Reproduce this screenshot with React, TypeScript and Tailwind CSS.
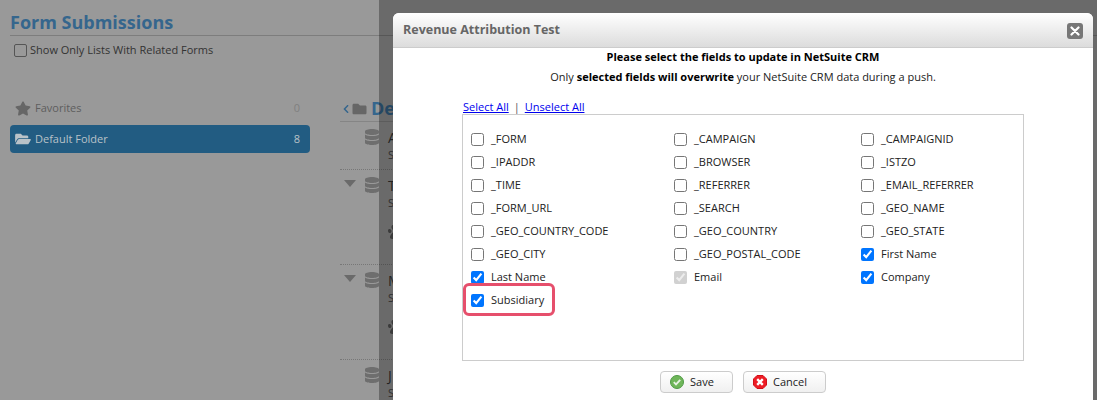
import React from 'react';
import { FaStar, FaFolderOpen, FaFolder, FaDatabase, FaPaw, FaChevronLeft } from 'react-icons/fa';

const fields = [
  { name: '_FORM' }, { name: '_CAMPAIGN' }, { name: '_CAMPAIGNID' },
  { name: '_IPADDR' }, { name: '_BROWSER' }, { name: '_ISTZO' },
  { name: '_TIME' }, { name: '_REFERRER' }, { name: '_EMAIL_REFERRER' },
  { name: '_FORM_URL' }, { name: '_SEARCH' }, { name: '_GEO_NAME' },
  { name: '_GEO_COUNTRY_CODE' }, { name: '_GEO_COUNTRY' }, { name: '_GEO_STATE' },
  { name: '_GEO_CITY' }, { name: '_GEO_POSTAL_CODE' }, { name: 'First Name', checked: true },
  { name: 'Last Name', checked: true }, { name: 'Email', checked: true, disabled: true }, { name: 'Company', checked: true },
  { name: 'Subsidiary', checked: true },
];

// rows of the list behind the dialog, only their left edge shows
const ListRow = ({ letter, caret, paw, height }: { letter: string; caret?: boolean; paw?: boolean; height: string }) => (
  <div className={`flex ${height} border-b border-dotted border-[#777] pt-[7px]`}>
    <div className="w-[25px] pl-[4px] pt-[3px]">
      {caret && (
        <svg viewBox="0 0 12 7" className="w-[12px] h-[7px]">
          <path d="M0 0 H12 L6 7 Z" fill="#6a6a6a" />
        </svg>
      )}
    </div>
    <FaDatabase className="w-[14px] h-[16px] text-[#6e6e6e]" />
    <div className="ml-[9px]">
      <p className="text-[14px] leading-[18px] text-[#333]">{letter}</p>
      <p className="text-[11px] leading-[16px] text-[#444]">S</p>
      {paw && <FaPaw className="w-[16px] h-[16px] mt-[13px] text-[#555]" />}
    </div>
  </div>
);

const App = () => {
  return (
    <div className="relative w-[1097px] h-[400px] overflow-hidden bg-[#999999] font-['Open_Sans',sans-serif] text-[11px]">
      {/* page under the overlay */}
      <div className="pl-[10px] pt-[10px]">
        <h1 className="text-[18px] leading-[25px] font-bold text-[#35668d] border-b border-[#7d7d7d] h-[26px]">Form Submissions</h1>
        <label className="flex items-center gap-[3px] mt-[7px] pl-[4px] h-[14px] text-[#333]">
          <input type="checkbox" className="appearance-none w-[13px] h-[13px] m-0 rounded-[2px] border border-[#555]" />
          Show Only Lists With Related Forms
        </label>
        <div className="flex mt-[39px]">
          <div className="w-[300px]">
            <div className="flex items-center h-[24px] pl-[5px] pr-[10px] text-[#5e5e5e]">
              <FaStar className="w-[16px] h-[15px] text-[#666]" />
              <span className="ml-[4px]">Favorites</span>
              <span className="ml-auto text-[#808080]">0</span>
            </div>
            <div className="flex items-center h-[28px] mt-[5px] pl-[5px] pr-[10px] rounded-[4px] bg-[#225c82] text-[#b9c2c8]">
              <FaFolderOpen className="w-[16px] h-[14px]" />
              <span className="ml-[4px]">Default Folder</span>
              <span className="ml-auto">8</span>
            </div>
          </div>
          <div className="ml-[30px] w-[200px]">
            <div className="flex items-center h-[26px] border-b border-[#858585]">
              <FaChevronLeft className="w-[6px] h-[10px] ml-[3px] text-[#35668d]" />
              <FaFolder className="w-[15px] h-[14px] ml-[3px] text-[#666]" />
              <span className="ml-[4px] text-[18px] font-bold text-[#35668d]">Default</span>
            </div>
            <ListRow letter="A" height="h-[48px]" />
            <ListRow letter="T" caret paw height="h-[95px]" />
            <ListRow letter="M" caret paw height="h-[95px]" />
            <ListRow letter="J" height="h-[48px]" />
          </div>
        </div>
      </div>

      {/* dialog overlay */}
      <div className="absolute inset-y-0 left-[379px] right-0 bg-black/30 pl-[14px] pr-[4px] pt-[13px]">
        <div className="h-[400px] bg-white rounded-t-[6px]">
          <div className="flex items-center justify-between h-[35px] pl-[10px] pr-[10px] rounded-t-[6px] border-b border-[#cccccc] bg-gradient-to-b from-white to-[#dcdcdc]">
            <span className="text-[12.5px] font-bold text-[#666666]">Revenue Attribution Test</span>
            <button className="flex items-center justify-center w-[16px] h-[16px] mt-[1px] rounded-[3px] bg-[#777777]">
              <svg viewBox="0 0 10 10" className="w-[10px] h-[10px]">
                <path d="M1.5 1.5 L8.5 8.5 M8.5 1.5 L1.5 8.5" stroke="#ffffff" strokeWidth="2.2" strokeLinecap="round" />
              </svg>
            </button>
          </div>
          <p className="text-center font-bold text-black leading-[16px] mt-[1px]">Please select the fields to update in NetSuite CRM</p>
          <p className="text-center text-[#222] leading-[16px] mt-[4px]">
            Only <span className="font-bold text-black">selected fields will overwrite</span> your NetSuite CRM data during a push.
          </p>
          <div className="ml-[69px] mt-[14px] w-[562px]">
            <div className="h-[15px] leading-[16px] pl-[1px] text-[#555]">
              <a className="underline text-[#0000ee]">Select All</a>
              <span className="mx-[5px]">|</span>
              <a className="underline text-[#0000ee]">Unselect All</a>
            </div>
            <div className="relative h-[247px] border border-[#cccccc] pl-[8px] pt-[13px]">
              <div className="grid grid-cols-[203px_187px_1fr] auto-rows-[23px]">
                {fields.map((f) => (
                  <label key={f.name} className="flex items-center gap-[7px] h-[23px] text-[#222]">
                    <input type="checkbox" defaultChecked={f.checked} disabled={f.disabled} className="w-[13px] h-[13px] m-0" />
                    {f.name}
                  </label>
                ))}
              </div>
              {/* annotation round the Subsidiary row */}
              <div className="absolute left-0 top-[168px] w-[92px] h-[33px] rounded-[6px] border-[3px] border-[#e64f6c]" />
            </div>
            <div className="flex justify-center gap-[10px] mt-[10px]">
              <button className="flex items-center gap-[6px] w-[73px] h-[22px] pl-[9px] rounded-[4px] border border-[#cccccc] bg-gradient-to-b from-white to-[#f0f0f0] text-[#222]">
                <svg viewBox="0 0 14 14" className="w-[14px] h-[14px]">
                  <circle cx="7" cy="7" r="6.5" fill="#6fb65a" stroke="#4f9a45" />
                  <path d="M3.8 7.2 L6 9.4 L10.2 4.8" fill="none" stroke="#e8f2e4" strokeWidth="1.8" />
                </svg>
                Save
              </button>
              <button className="flex items-center gap-[6px] w-[83px] h-[22px] pl-[9px] rounded-[4px] border border-[#cccccc] bg-gradient-to-b from-white to-[#f0f0f0] text-[#222]">
                <svg viewBox="0 0 14 14" className="w-[14px] h-[14px]">
                  <path d="M4 0.5 H10 L13.5 4 V10 L10 13.5 H4 L0.5 10 V4 Z" fill="#ee1c25" stroke="#d01018" />
                  <path d="M4.2 4.2 L9.8 9.8 M9.8 4.2 L4.2 9.8" stroke="#ffffff" strokeWidth="2.4" />
                </svg>
                Cancel
              </button>
            </div>
          </div>
        </div>
      </div>
    </div>
  );
};

export default App;
